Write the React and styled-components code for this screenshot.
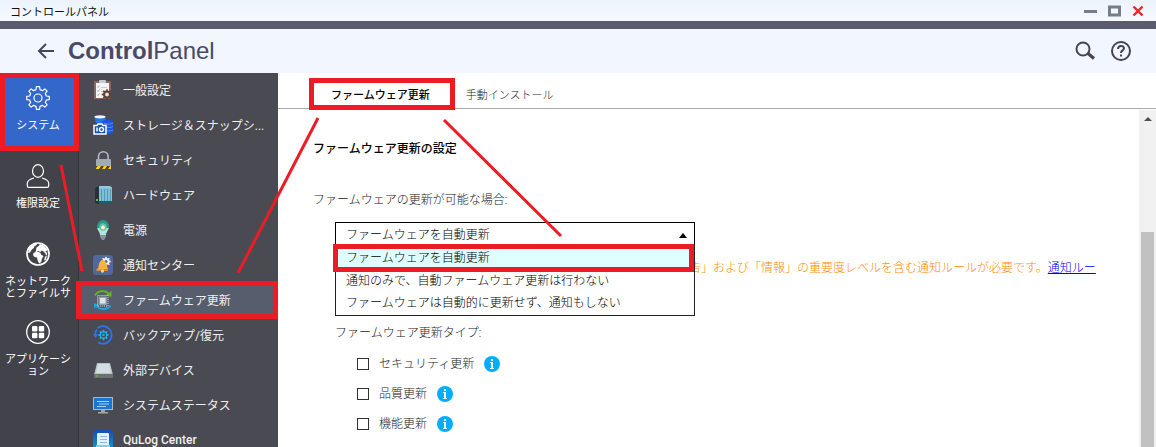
import React, { useState } from "react";
import styled, { createGlobalStyle } from "styled-components";

const RED = "#ed1c24";

const GlobalStyle = createGlobalStyle`
  * { box-sizing: border-box; }
  body {
    margin: 0;
    font-family: Roboto, "Noto Sans CJK JP", sans-serif;
    font-size: 12px;
    color: #333;
    background: #fff;
  }
  button, select, input { font-family: inherit; font-size: inherit; margin: 0; }
  button { padding: 0; border: none; background: none; color: inherit; cursor: pointer; }
  svg { display: block; flex-shrink: 0; }
`;

const Window = styled.div`
  position: relative; /* anchor for the guide lines */
  height: 100vh;
  display: flex;
  flex-direction: column;
  overflow: hidden;
`;

const TitleBar = styled.div`
  flex: none;
  height: 21px;
  display: flex;
  align-items: center;
  justify-content: space-between;
  padding: 0 12px 0 10px;
  background: linear-gradient(#ecf3fc, #f6faff);
  font-size: 11px;
  color: #111;
`;

const WindowButtons = styled.div`
  display: flex;
  align-items: center;
  gap: 11px;
`;

const Header = styled.header`
  flex: none;
  height: 52px;
  display: flex;
  align-items: center;
  padding: 0 24px 0 37px;
  border-top: 8px solid #5b5b70;
  background: #f2f7ff;
  color: #45455a;
`;

const Logo = styled.h1`
  flex: 1;
  margin: 0 0 0 12px;
  font: 400 24px/28px "Liberation Sans", sans-serif;
  color: #494968;
`;

const HeaderTools = styled.div`
  display: flex;
  align-items: center;
  gap: 14px;
`;

const Body = styled.div`
  flex: 1;
  min-height: 0;
  display: flex;
`;

const Rail = styled.nav`
  flex: none;
  width: 79px;
  display: flex;
  flex-direction: column;
  background: #42424a;
  border-right: 1px solid #35353b;
`;

const RailItem = styled.button`
  height: 78px;
  flex: none;
  display: flex;
  flex-direction: column;
  align-items: center;
  gap: 10px;
  padding: 13px 5px 0 3px;
  color: #fff;
  font-size: 11px;
  line-height: 12px;
  ${(props) =>
    props.$active &&
    `
    margin-right: -1px;
    padding: 8px 3px 0 0;
    border: 5px solid ${RED};
    background: #3368ca;
  `}
`;

const Menu = styled.nav`
  flex: none;
  width: 199px;
  display: flex;
  flex-direction: column;
  background: #4a4a52;
`;

const MenuItem = styled.button`
  position: relative;
  flex: none;
  height: 35px;
  display: flex;
  align-items: center;
  gap: 10px;
  padding: 0 0 2px 14px;
  color: #f0f0f0;
  font-size: 12px;
  font-weight: ${(props) => (props.$latin ? 500 : 400)};
  background: ${(props) => (props.$active ? "#565e6e" : "transparent")};
  &::after {
    content: ${(props) => (props.$active ? '""' : "none")};
    position: absolute;
    inset: -2px 0 -1px -3px;
    border: 5px solid ${RED};
  }
`;

const Main = styled.main`
  flex: 1;
  min-width: 0;
  display: flex;
  flex-direction: column;
`;

const Tabs = styled.div`
  flex: none;
  height: 36px;
  display: flex;
  align-items: flex-start;
  padding: 5px 0 0 31px;
  border-bottom: 1px solid #a9a9a9;
`;

const Tab = styled.button`
  height: 32px;
  padding: 0 ${(props) => (props.$active ? "20px 0 17px" : "11px")};
  border: ${(props) => (props.$active ? `5px solid ${RED}` : "none")};
  font-size: 11px;
  font-weight: ${(props) => (props.$active ? 500 : 300)};
  color: ${(props) => (props.$active ? "#000" : "#222")};
  background: ${(props) => (props.$active ? "#fff" : "transparent")};
`;

const Scroller = styled.div`
  flex: 1;
  min-height: 0;
  display: flex;
  padding-top: 1px;
`;

const Content = styled.div`
  flex: 1;
  min-width: 0;
  padding: 29px 35px 0;
  font-weight: 300;
  line-height: 20px;
  color: #222;
`;

const SectionTitle = styled.h2`
  margin: 0 0 31px;
  font-size: 12px;
  font-weight: 500;
  color: #000;
`;

const FieldLabel = styled.label`
  display: block;
  margin-bottom: 12px;
`;

const Indented = styled.div`
  padding-left: 22px;
`;

const Dropdown = styled.div`
  position: relative;
  width: 360px;
`;

const Select = styled.select`
  display: block;
  appearance: none;
  width: 100%;
  height: 26px;
  padding: 0 10px;
  border: 1px solid #000;
  border-radius: 0;
  background: #fff;
  color: #000;
  font-weight: 300;
`;

const Caret = styled.span`
  position: absolute;
  top: 11px;
  right: 8px;
  border: 4px solid transparent;
  border-top: none;
  border-bottom: 5px solid #000;
  pointer-events: none;
`;

const OptionList = styled.ul`
  position: absolute;
  z-index: 1;
  top: 22px;
  left: 0;
  right: 0;
  margin: 0;
  padding: 0 0 1px;
  list-style: none;
  border: 1px solid #222;
  border-top: none;
  background: #fff;
`;

const Option = styled.li`
  height: 22px;
  padding-left: 10px;
  line-height: 22px;
  color: #000;
  cursor: pointer;
  ${(props) =>
    props.$active &&
    `
    height: 28px;
    margin: 0 0 -2px -3px;
    padding-left: 8px;
    line-height: 18px;
    border: 5px solid ${RED};
    background: #dfffff;
  `}
`;

const Note = styled.p`
  margin: 10px 0 45px;
  padding-left: 354px;
  color: #ff8c00;
  white-space: nowrap;
  a { color: #00f; }
`;

const GroupLabel = styled.div`
  margin-bottom: 6px;
`;

const CheckRow = styled.div`
  height: 30px;
  display: flex;
  align-items: center;
  padding-left: 22px;
  label {
    display: flex;
    align-items: center;
    gap: 10px;
    margin-right: 10px;
  }
`;

const CheckBox = styled.input`
  appearance: none;
  width: 12px;
  height: 12px;
  border: 1px solid #333;
  background: #fff;
  &:checked { background: #3368ca; }
`;

const ScrollTrack = styled.div`
  flex: none;
  width: 17px;
  display: flex;
  flex-direction: column;
  align-items: center;
  background: #f1f1f1;
`;

const ScrollArrow = styled.span`
  margin: 7px 0 0;
  border: 4px solid transparent;
  border-top: none;
  border-bottom: 4px solid #505050;
`;

const ScrollThumb = styled.div`
  flex: 1;
  width: 13px;
  margin-top: 111px;
  background: #c1c1c1;
`;

const GuideLines = styled.svg`
  position: absolute;
  z-index: 2;
  top: 0;
  left: 0;
  pointer-events: none;
`;

const gearPath = (cx, cy, outer, inner, teeth) => {
  const step = (Math.PI * 2) / teeth;
  const pts = [];
  for (let i = 0; i < teeth; i++) {
    [[-0.3, inner], [-0.18, outer], [0.18, outer], [0.3, inner]].forEach(([k, r]) => {
      const a = (i + k) * step - Math.PI / 2;
      pts.push(`${(cx + r * Math.cos(a)).toFixed(2)} ${(cy + r * Math.sin(a)).toFixed(2)}`);
    });
  }
  return `M${pts.join("L")}Z`;
};

const Svg = ({ size = 20, children }) => (
  <svg width={size} height={size} viewBox={`0 0 ${size} ${size}`} fill="none" aria-hidden="true">
    {children}
  </svg>
);

const GearIcon = () => (
  <Svg size={24}>
    <path d={gearPath(12, 12, 11.4, 8.6, 8)} stroke="#fff" strokeWidth="1.2" strokeLinejoin="round" />
    <circle cx="12" cy="12" r="4" stroke="#fff" strokeWidth="1.2" />
  </Svg>
);

const UserIcon = () => (
  <Svg size={24}>
    <ellipse cx="12" cy="7" rx="5.5" ry="6.3" stroke="#fff" strokeWidth="1.2" />
    <path d="M8 14C4 15 1.3 16.5 1.3 19.5v2.2q0 1.6 1.6 1.6h18.2q1.6 0 1.6-1.6v-2.2c0-3-2.7-4.5-6.7-5.5" stroke="#fff" strokeWidth="1.2" />
  </Svg>
);

const GlobeIcon = () => (
  <Svg size={24}>
    <circle cx="12" cy="12" r="11" stroke="#fff" strokeWidth="1.7" />
    <path d="M3 6.500l3-3.500 4-1.500 1 1.200-2.500 1.500-.5 1.500L5.500 8 4 10.500 2 11z" fill="#fff" />
    <path d="M10.500 5.500l2-1.500 1.500-2 4 1.500 3.500 4.500-2 1.500 1.800 1.500-.8 3-1.500-3-2-2-1.500-.5-1 1.500-2.500-1-2.500 1.500z" fill="#fff" />
    <path d="M7.500 11l3-1.500 3.500 1 1.500 2.500 2 1-1.500 2.500-.8 3.500-2.200 1.500-1.500-3.500-.5-2.500-2.500-.5-1.500-2z" fill="#fff" />
    <path d="M19 14.500l2-.5-1.500 4-1.500.5z" fill="#fff" />
  </Svg>
);

const AppsIcon = () => (
  <Svg size={24}>
    <circle cx="12" cy="12" r="11.3" stroke="#fff" strokeWidth="1.3" />
    <g fill="#fff">
      <rect x="6" y="6" width="5.4" height="5.4" rx="1" />
      <rect x="12.8" y="6" width="5.4" height="5.4" rx="1" />
      <rect x="6" y="12.8" width="5.4" height="5.4" rx="1" />
      <rect x="12.8" y="12.8" width="5.4" height="5.4" rx="1" />
    </g>
  </Svg>
);

const ClipboardIcon = () => (
  <Svg>
    <rect x="1" y="1" width="17" height="18" rx="1" fill="#8b6a5c" />
    <rect x="3" y="3" width="13" height="15" fill="#f5f5f5" />
    <rect x="6" y="0" width="7" height="3" rx="1" fill="#c5cbd0" />
    <path d="M4 6.5l1 1 1.5-2M4 10.5l1 1 1.5-2M4 14.5l1 1 1.5-2" stroke="#999" strokeWidth=".8" />
    <path d="M8 7.5h6M8 11.5h2" stroke="#ccc" />
    <path d={gearPath(14, 14.5, 5.3, 4, 8)} fill="#5e4036" />
    <circle cx="14" cy="14.5" r="2" fill="#e8ddd8" />
  </Svg>
);

const StorageIcon = () => (
  <Svg>
    <path d="M1 1h11l1 5-3 2H3z" fill="#2676e4" />
    <ellipse cx="7" cy="1.8" rx="5.5" ry="1.6" fill="#f1f7ff" />
    <path d="M9 7c0-3 11-3 11 0v10c0 3-11 3-11 0z" fill="#1d56d8" />
    <path d="M11 8.500c2 1 6 1 9-.5M13 12c3 .8 5 .5 7-.5M13 15.500c3 .8 5 .5 7-.5" stroke="#6aa4fa" strokeWidth=".8" />
    <path d="M1 10.500h3l1-1.500h4l1 1.500h3v8.500H1z" fill="#174fae" stroke="#fff" strokeWidth="1.5" />
    <circle cx="8.500" cy="14.500" r="2" stroke="#fff" strokeWidth="1.5" />
    <path d="M4 12.500v4" stroke="#fff" strokeWidth="1.5" />
  </Svg>
);

const LockIcon = () => (
  <Svg>
    <path d="M5.5 10V6.500a4.800 4.800 0 0 1 9.600 0V10" stroke="#b4bac1" strokeWidth="1.6" />
    <rect x="3" y="9" width="15" height="10" rx="1" fill="#a3aab3" />
    <path d="M3 16h15v3H3z" fill="#4b4433" />
    <path d="M3 19v-1l2-2h3l-2 3zM9 19l2-3h3l-2 3zM15 19l2-3h1v3z" fill="#ffcf24" />
  </Svg>
);

const HardwareIcon = () => (
  <Svg>
    <path d="M2 3l4-2v18l-4-1z" fill="#263238" />
    <path d="M3 14h2v2H3z" fill="#5fbf45" />
    <path d="M6 1h11l2 1.5V17H6z" fill="#8fcbdf" />
    <rect x="6" y="3.5" width="12.5" height="13" fill="#7cc0d8" />
    <path d="M8.5 4v12M11.5 4v12M14.5 4v12M17.5 4v12" stroke="#4d92aa" strokeWidth=".8" />
    <path d="M6 16h13v2H6z" fill="#1b5c70" />
  </Svg>
);

const BulbIcon = () => (
  <Svg>
    <path d="M10 0a6 6.500 0 0 1 6 6.500c0 4-3 5-3 8.500H7c0-3.500-3-4.500-3-8.500A6 6.500 0 0 1 10 0z" fill="#279b8b" />
    <path d="M4.300 8h11.400c-.7 3-2.700 4-2.700 7H7c0-3-2-4-2.700-7z" fill="#b5e3dc" />
    <circle cx="10" cy="7" r="3.7" fill="#65c3aa" />
    <circle cx="10" cy="7.500" r="2" fill="#fff2b8" />
    <path d="M7 15h6v2l-2 3H9l-2-3z" fill="#87939b" />
  </Svg>
);

const BellIcon = () => (
  <Svg>
    <rect width="20" height="20" rx="3" fill="#50699a" />
    <path d={gearPath(13, 6.5, 4.8, 3.600, 8)} fill="#edf1f7" />
    <circle cx="13" cy="6.5" r="1.5" fill="#50699a" />
    <path d="M4 14.500l1.500-2c.3-4 .8-6 3-7l1-1 1 1c2.700 1 3.300 3 3.600 6.500l1 2z" fill="#ffb13d" />
    <path d="M3.500 14l11.500.5v1.200H3.500z" fill="#ff9a26" />
    <circle cx="9.500" cy="16" r="1.700" fill="#ffd36b" />
  </Svg>
);

const FirmwareIcon = () => (
  <Svg>
    <path d="M2 5.500C5 .5 12-.5 16 4" stroke="#62b81b" strokeWidth="1.700" />
    <path d="M18.500 1v6l-6-1.500z" fill="#62b81b" />
    <path d="M17.500 15.500c-3 4.500-10 5-14 .8" stroke="#1da5e8" strokeWidth="1.700" />
    <path d="M1 18.500v-5.500l5 2z" fill="#1da5e8" />
    <rect x="4.500" y="5.500" width="10.500" height="10.500" stroke="#cfd8dc" strokeDasharray="1 1" />
    <rect x="5.500" y="6.500" width="8.500" height="8.500" rx="1" fill="#8f9da7" />
    <rect x="7" y="8" width="5.500" height="5.500" fill="#dce5e8" />
  </Svg>
);

const BackupIcon = () => (
  <Svg>
    <path d="M4.500 3A8.800 8.800 0 1 1 5 17.300M2.200 11C2 8 2.500 6 4 4.500" stroke="#2f73ee" strokeWidth="1.8" />
    <path d="M0 9h5l-2.500 4z" fill="#2f73ee" />
    <path d={gearPath(10.500, 10, 5.200, 3.900, 8)} fill="#21aef2" />
    <circle cx="10.500" cy="10" r="2.600" fill="#424d5c" />
    <circle cx="10.500" cy="10" r="1.200" fill="#21aef2" />
  </Svg>
);

const DriveIcon = () => (
  <Svg>
    <path d="M4 3h13l3 12H1z" fill="#b9c4ca" />
    <path d="M5 4h11l2 9H3z" fill="#d5dde1" />
    <path d="M1 14h19v4H1z" fill="#6b736f" />
    <path d="M3 15.500h2v1H3z" fill="#77c922" />
  </Svg>
);

const MonitorIcon = () => (
  <Svg>
    <rect y="2" width="20" height="13" fill="#aab8c0" />
    <rect x="1" y="3" width="18" height="11" fill="#1976d2" />
    <path d="M4 6.500h12M6 9h10M4 11.500h9" stroke="#a9d0f7" />
    <path d="M8 15h4v2h3v1.500H5V17h3z" fill="#9aa9b1" />
  </Svg>
);

const LogIcon = () => (
  <Svg>
    <defs>
      <linearGradient id="log" x2="0" y2="1">
        <stop stopColor="#174bb8" />
        <stop offset="1" stopColor="#159bd0" />
      </linearGradient>
    </defs>
    <rect width="20" height="20" rx="3" fill="url(#log)" />
    <rect x="4" y="3" width="12" height="13" rx="1" fill="#e6f1ff" />
    <path d="M7 6.500h7M7 9.500h7M7 12.500h7" stroke="#8cb7ed" />
    <path d="M3 15h14v3H3z" fill="#75d4e8" />
  </Svg>
);

const railItems = [
  { label: "システム", icon: <GearIcon /> },
  { label: "権限設定", icon: <UserIcon /> },
  { label: "ネットワークとファイルサ", icon: <GlobeIcon /> },
  { label: "アプリケーション", icon: <AppsIcon /> },
];

const menuItems = [
  { label: "一般設定", icon: <ClipboardIcon /> },
  { label: "ストレージ＆スナップシ...", icon: <StorageIcon /> },
  { label: "セキュリティ", icon: <LockIcon /> },
  { label: "ハードウェア", icon: <HardwareIcon /> },
  { label: "電源", icon: <BulbIcon /> },
  { label: "通知センター", icon: <BellIcon /> },
  { label: "ファームウェア更新", icon: <FirmwareIcon /> },
  { label: "バックアップ/復元", icon: <BackupIcon /> },
  { label: "外部デバイス", icon: <DriveIcon /> },
  { label: "システムステータス", icon: <MonitorIcon /> },
  { label: "QuLog Center", icon: <LogIcon />, latin: true },
];

const updateModes = [
  "ファームウェアを自動更新",
  "通知のみで、自動ファームウェア更新は行わない",
  "ファームウェアは自動的に更新せず、通知もしない",
];

const updateTypes = ["セキュリティ更新", "品質更新", "機能更新"];

const InfoButton = () => (
  <button type="button" aria-label="情報">
    <Svg size={16}>
      <circle cx="8" cy="8" r="8" fill="#00adff" />
      <path d="M7 3h2v2H7zM6 6h3v6h1v1H6v-1h1V7H6z" fill="#fff" />
    </Svg>
  </button>
);

const FirmwareSettings = () => {
  const [mode, setMode] = useState(updateModes[0]);

  return (
    <Content>
      <SectionTitle>ファームウェア更新の設定</SectionTitle>
      <FieldLabel htmlFor="mode">ファームウェアの更新が可能な場合:</FieldLabel>
      <Indented>
        <Dropdown>
          <Select id="mode" value={mode} onChange={(e) => setMode(e.target.value)}>
            {updateModes.map((item) => (
              <option key={item}>{item}</option>
            ))}
          </Select>
          <Caret />
          <OptionList role="listbox" aria-label="更新方法">
            {updateModes.map((item) => (
              <Option
                key={item}
                role="option"
                aria-selected={item === mode}
                $active={item === mode}
                onClick={() => setMode(item)}
              >
                {item}
              </Option>
            ))}
          </OptionList>
        </Dropdown>
        <Note>
          告」および「情報」の重要度レベルを含む通知ルールが必要です。<a href="#rules">通知ルー</a>
        </Note>
        <GroupLabel>ファームウェア更新タイプ:</GroupLabel>
        {updateTypes.map((item) => (
          <CheckRow key={item}>
            <label>
              <CheckBox type="checkbox" />
              {item}
            </label>
            <InfoButton />
          </CheckRow>
        ))}
      </Indented>
    </Content>
  );
};

const App = () => {
  const [section, setSection] = useState("システム");
  const [page, setPage] = useState("ファームウェア更新");

  return (
    <Window>
      <GlobalStyle />
      <TitleBar>
        <span>コントロールパネル</span>
        <WindowButtons>
          <button type="button" aria-label="最小化">
            <svg width="13" height="12"><path d="M0 5h13v3H0z" fill="#777e86" /></svg>
          </button>
          <button type="button" aria-label="最大化">
            <svg width="13" height="12"><path d="M1.5 2h10v8h-10z" fill="none" stroke="#777e86" strokeWidth="3" /></svg>
          </button>
          <button type="button" aria-label="閉じる">
            <svg width="12" height="12"><path d="M1.5 1.5l9 9M10.5 1.5l-9 9" stroke="#ed2424" strokeWidth="2.4" /></svg>
          </button>
        </WindowButtons>
      </TitleBar>
      <Header>
        <button type="button" aria-label="戻る">
          <svg width="19" height="16" viewBox="0 0 19 16" fill="none" stroke="#45455f" strokeWidth="2">
            <path d="M9 1L2 8l7 7M2 8h15" />
          </svg>
        </button>
        <Logo><b>Control</b>Panel</Logo>
        <HeaderTools>
          <button type="button" aria-label="検索">
            <svg width="22" height="20" viewBox="0 0 22 20" fill="none" stroke="#45454e">
              <circle cx="9" cy="8" r="6.5" strokeWidth="2" />
              <path d="M13.5 12l6.5 5.5" strokeWidth="3.2" />
            </svg>
          </button>
          <button type="button" aria-label="ヘルプ">
            <svg width="22" height="22" viewBox="0 0 22 22" fill="none" stroke="#45454e" strokeWidth="2">
              <circle cx="11" cy="11" r="9" />
              <path d="M8 9c0-4 6-4 6-.7C14 10.5 11 10.3 11 13M11 14.5v2" />
            </svg>
          </button>
        </HeaderTools>
      </Header>
      <Body>
        <Rail>
          {railItems.map(({ label, icon }) => (
            <RailItem key={label} type="button" $active={label === section} onClick={() => setSection(label)}>
              {icon}
              {label}
            </RailItem>
          ))}
        </Rail>
        <Menu>
          {menuItems.map(({ label, icon, latin }) => (
            <MenuItem
              key={label}
              type="button"
              $active={label === page}
              $latin={latin}
              onClick={() => setPage(label)}
            >
              {icon}
              {label}
            </MenuItem>
          ))}
        </Menu>
        <Main>
          <Tabs role="tablist">
            <Tab type="button" role="tab" aria-selected="true" $active>ファームウェア更新</Tab>
            <Tab type="button" role="tab" aria-selected="false">手動インストール</Tab>
          </Tabs>
          <Scroller>
            <FirmwareSettings />
            <ScrollTrack aria-hidden="true">
              <ScrollArrow />
              <ScrollThumb />
            </ScrollTrack>
          </Scroller>
        </Main>
      </Body>
      <GuideLines width="600" height="300" stroke={RED} strokeWidth="3" aria-hidden="true">
        <path d="M61 165L82 271M318 118L238 273M444 120L561 236" />
      </GuideLines>
    </Window>
  );
};

export default App;
